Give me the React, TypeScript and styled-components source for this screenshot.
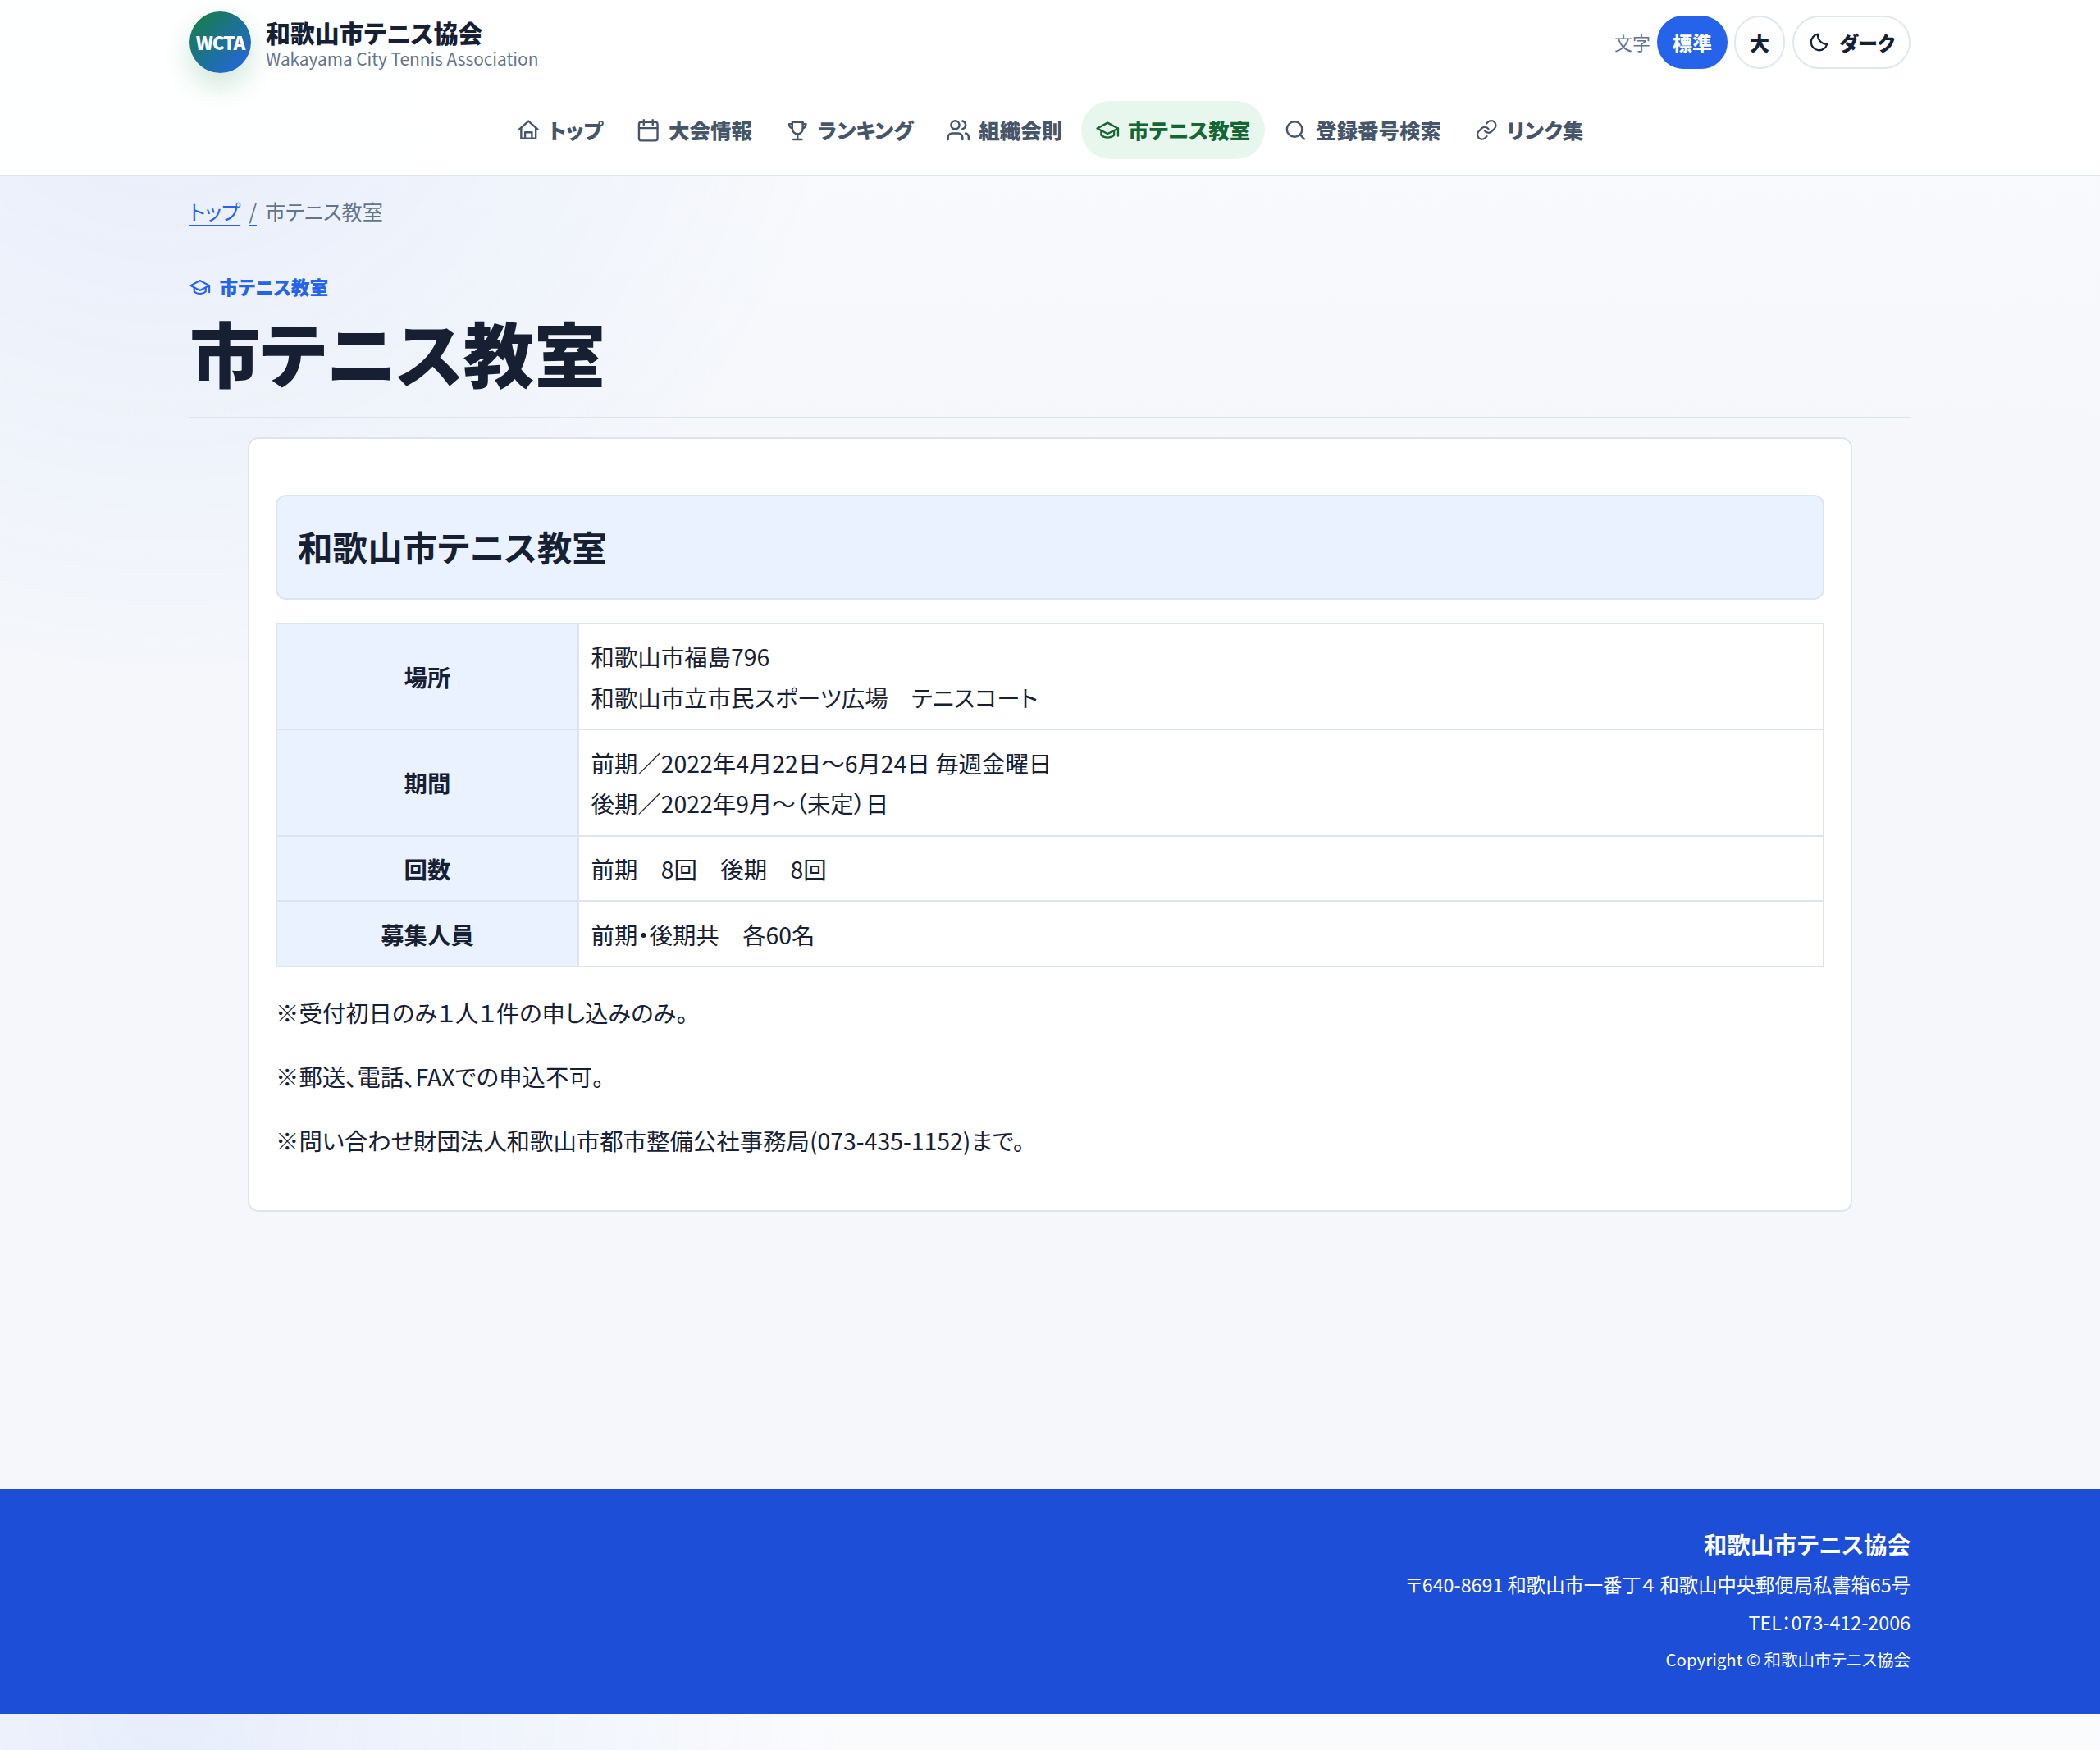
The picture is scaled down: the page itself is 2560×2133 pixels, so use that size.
import React from "react";
import styled, { createGlobalStyle, css } from "styled-components";

const Global = createGlobalStyle`
  *, *::before, *::after { box-sizing: border-box; }
  body {
    margin: 0;
    color: #172033;
    font-family: "Noto Sans CJK JP", "Noto Sans", sans-serif;
    font-feature-settings: "palt";
    font-size: 28.42px;
    line-height: 49.8px;
    background:
      radial-gradient(circle at 8% 0%, rgba(37, 99, 235, 0.085), transparent 830px),
      linear-gradient(180deg, #fafbfd 0, #f5f7fb 560px, #f5f7fb 100%);
  }
`;

const Header = styled.header`
  height: 215px;
  background: rgba(255, 255, 255, 0.95);
  border-bottom: 2px solid #dfe6ef;
`;
const Inner = styled.div`
  width: 2098px;
  margin: 0 auto;
`;
const Bar = styled(Inner)`
  display: flex;
  align-items: center;
  justify-content: space-between;
  height: 103px;
`;
const Brand = styled.a`
  display: flex;
  align-items: center;
  gap: 18px;
  color: #172033;
`;
const Mark = styled.span`
  display: grid;
  place-items: center;
  width: 75px;
  height: 75px;
  border-radius: 50%;
  color: #fff;
  font-size: 22.5px;
  font-weight: 900;
  letter-spacing: -0.05em;
  background: linear-gradient(135deg, #15803d, #2563eb);
  box-shadow: 0 15px 33px rgba(21, 128, 61, 0.2);
`;
const BrandText = styled.span`
  display: flex;
  flex-direction: column;
  padding-top: 3px;
`;
const BrandName = styled.strong`
  font-size: 29.9px;
  font-weight: 900;
  line-height: 36px;
`;
const BrandSub = styled.small`
  color: #64748b;
  font-size: 20.8px;
  line-height: 29px;
`;
const Tools = styled.div`
  display: flex;
  align-items: center;
  gap: 8px;
`;
const ToolLabel = styled.span`
  color: #64748b;
  font-size: 22px;
`;
const Pill = styled.button<{ $on?: boolean }>`
  display: inline-flex;
  align-items: center;
  justify-content: center;
  gap: 11px;
  height: 65px;
  padding: 0 17px;
  border: 2px solid ${(p) => (p.$on ? "#2563eb" : "#dfe7f0")};
  border-radius: 999px;
  background: ${(p) => (p.$on ? "#2563eb" : "#fff")};
  color: ${(p) => (p.$on ? "#fff" : "#172033")};
  font: inherit;
  font-size: 24px;
  font-weight: 900;
  font-feature-settings: "palt";
  &:last-child { margin-left: 1px; }
`;
const Nav = styled.nav`
  display: flex;
  justify-content: center;
  gap: 4.8px;
  padding-top: 20px;
`;
const NavItem = styled.a<{ $on?: boolean }>`
  display: inline-flex;
  align-items: center;
  gap: 10.5px;
  height: 71px;
  padding: 0 18px;
  border-radius: 999px;
  color: ${(p) => (p.$on ? "#166534" : "#475569")};
  background: ${(p) => (p.$on ? "#e8f7ee" : "transparent")};
  font-size: 25.5px;
  font-weight: 800;
`;
const NavLabel = styled.span`
  padding-bottom: 2px;
`;
const Svg = styled.svg<{ $size: number }>`
  flex: none;
  width: ${(p) => p.$size}px;
  height: ${(p) => p.$size}px;
  overflow: visible;
  fill: none;
  stroke: currentColor;
  stroke-width: 2;
  stroke-linecap: round;
  stroke-linejoin: round;
`;
const Crumbs = styled(Inner)`
  display: flex;
  gap: 10px;
  padding-top: 20px;
  color: #64748b;
  font-size: 25.1px;
  line-height: 44px;
`;
const linkLine = css`
  color: #2563eb;
  text-decoration: underline;
  text-decoration-thickness: 2px;
  text-underline-offset: 6px;
`;
const CrumbLink = styled.a`
  ${linkLine}
`;
const CrumbSep = styled.span`
  ${linkLine}
  color: #64748b;
  text-decoration-color: #2563eb;
`;
const PageHead = styled(Inner)`
  height: 231px;
  padding-top: 50px;
  border-bottom: 2px solid #dce4ee;
`;
const Eyebrow = styled.p`
  display: flex;
  align-items: center;
  gap: 11px;
  margin: 0;
  color: #2563eb;
  font-size: 22.7px;
  font-weight: 900;
  line-height: 42px;
`;
const Title = styled.h1`
  margin: -3px 0 0;
  font-size: 86.7px;
  font-weight: 900;
  line-height: 120px;
`;
const Card = styled.main`
  width: 1956px;
  height: 944px;
  margin: 23px auto 0;
  padding: 67.5px 32px 0;
  background: #fff;
  border: 2px solid #dce4ee;
  border-radius: 13px;
`;
const SectionTitle = styled.h2`
  display: flex;
  align-items: center;
  height: 128px;
  margin: 0 0 28px;
  padding: 0 25px 2px;
  border: 2px solid #dce4ee;
  border-radius: 13px;
  background: #eaf1ff;
  font-size: 42.6px;
  font-weight: 700;
`;
const Table = styled.table`
  width: 100%;
  border-collapse: collapse;
`;
const Th = styled.th`
  width: 368px;
  padding: 14.5px 14px 13.5px;
  border: 2px solid #dce4ee;
  background: #eaf1ff;
  font-weight: 700;
`;
const Td = styled.td`
  padding: 14.5px 14.5px 13.5px;
  border: 2px solid #dce4ee;
`;
const Note = styled.p`
  margin: 0 0 28.5px;
  &:first-of-type { margin-top: 29.5px; }
`;
const Footer = styled.footer`
  height: 274.5px;
  margin-top: 337.5px;
  padding-top: 41px;
  background: #1d4ed8;
  color: #fff;
`;
const FootInner = styled(Inner)`
  text-align: right;
`;
const FootLine = styled.div<{ $size: number; $h: number; $bold?: boolean }>`
  font-size: ${(p) => p.$size}px;
  line-height: ${(p) => p.$h}px;
  font-weight: ${(p) => (p.$bold ? 700 : 400)};
`;

const icons = {
  home: (<><path d="M2.5 11.5 12 3l9.5 8.5" /><path d="M4.5 10v10.8h15V10" /><path d="M8.5 20.8v-6.3h7v6.3" /></>),
  calendar: (<><path d="M7.4 1.8V7M16.6 1.8V7M2.5 10.2h19" /><rect x="2.5" y="4" width="19" height="19" rx="2.2" /></>),
  trophy: (<><path d="M6.6 4h10.8v6.5a5.4 5.9 0 0 1-10.8 0z" /><path d="M12 16.5v5.4M7.6 21.9h8.8" /><path d="M6.6 6H3.4c.1 2.3 1.3 4 3.3 4.4M17.4 6h3.2c-.1 2.3-1.3 4-3.3 4.4" /></>),
  users: (<g transform="translate(-.72 -.4) scale(1.06)"><path d="M16 21v-2a4 4 0 0 0-4-4H6a4 4 0 0 0-4 4v2" /><circle cx="9" cy="7" r="4" /><path d="M22 21v-2a4 4 0 0 0-3-3.87M16 3.13a4 4 0 0 1 0 7.75" /></g>),
  cap: (<><path d="M12 4.7 22.7 10.5 12 16 1.3 10.5z" /><path d="M5.4 12.8v4.6c1.8 1.7 4 2.5 6.6 2.5s4.8-.8 6.6-2.5v-4.6M22.7 10.5v7.6" /></>),
  search: (<><circle cx="11" cy="11.4" r="7.8" /><path d="M16.7 17 21 21.3" /></>),
  link: (<g transform="translate(.6 .7) scale(.95)"><path d="M10 13a5 5 0 0 0 7.54.54l3-3a5 5 0 0 0-7.07-7.07l-1.72 1.71" /><path d="M14 11a5 5 0 0 0-7.54-.54l-3 3a5 5 0 0 0 7.07 7.07l1.71-1.71" /></g>),
  moon: (<path d="M20.6 14.2A8.75 8.75 0 1 1 10.6 3.3 10.2 10.2 0 0 0 20.6 14.2z" />),
};
type IconName = keyof typeof icons;

const Icon = ({ name, size = 28.5 }: { name: IconName; size?: number }) => (
  <Svg $size={size} viewBox="0 0 24 24" aria-hidden="true">{icons[name]}</Svg>
);

const menu: { icon: IconName; label: string; on?: boolean }[] = [
  { icon: "home", label: "トップ" },
  { icon: "calendar", label: "大会情報" },
  { icon: "trophy", label: "ランキング" },
  { icon: "users", label: "組織会則" },
  { icon: "cap", label: "市テニス教室", on: true },
  { icon: "search", label: "登録番号検索" },
  { icon: "link", label: "リンク集" },
];

const rows: [string, string[]][] = [
  ["場所", ["和歌山市福島796", "和歌山市立市民スポーツ広場　テニスコート"]],
  ["期間", ["前期／2022年4月22日～6月24日 毎週金曜日", "後期／2022年9月～（未定）日"]],
  ["回数", ["前期　8回　後期　8回"]],
  ["募集人員", ["前期・後期共　各60名"]],
];

const notes = [
  "※受付初日のみ１人１件の申し込みのみ。",
  "※郵送、電話、FAXでの申込不可。",
  "※問い合わせ財団法人和歌山市都市整備公社事務局(073-435-1152)まで。",
];

export default function App() {
  return (
    <>
      <Global />
      <Header>
        <Bar>
          <Brand>
            <Mark>WCTA</Mark>
            <BrandText>
              <BrandName>和歌山市テニス協会</BrandName>
              <BrandSub>Wakayama City Tennis Association</BrandSub>
            </BrandText>
          </Brand>
          <Tools>
            <ToolLabel>文字</ToolLabel>
            <Pill $on>標準</Pill>
            <Pill>大</Pill>
            <Pill><Icon name="moon" size={27} />ダーク</Pill>
          </Tools>
        </Bar>
        <Nav>
          {menu.map((m) => (
            <NavItem key={m.label} $on={m.on}>
              <Icon name={m.icon} />
              <NavLabel>{m.label}</NavLabel>
            </NavItem>
          ))}
        </Nav>
      </Header>
      <Crumbs>
        <CrumbLink>トップ</CrumbLink>
        <CrumbSep>/</CrumbSep>
        <span>市テニス教室</span>
      </Crumbs>
      <PageHead>
        <Eyebrow><Icon name="cap" size={25.5} />市テニス教室</Eyebrow>
        <Title>市テニス教室</Title>
      </PageHead>
      <Card>
        <SectionTitle>和歌山市テニス教室</SectionTitle>
        <Table>
          <tbody>
            {rows.map(([head, lines]) => (
              <tr key={head}>
                <Th>{head}</Th>
                <Td>{lines.map((l) => <div key={l}>{l}</div>)}</Td>
              </tr>
            ))}
          </tbody>
        </Table>
        {notes.map((n) => <Note key={n}>{n}</Note>)}
      </Card>
      <Footer>
        <FootInner>
          <FootLine $size={28.5} $h={52} $bold>和歌山市テニス協会</FootLine>
          <FootLine $size={23.3} $h={46}>〒640-8691 和歌山市一番丁４ 和歌山中央郵便局私書箱65号</FootLine>
          <FootLine $size={23.3} $h={46}>TEL：073-412-2006</FootLine>
          <FootLine $size={20.45} $h={44}>Copyright © 和歌山市テニス協会</FootLine>
        </FootInner>
      </Footer>
    </>
  );
}
